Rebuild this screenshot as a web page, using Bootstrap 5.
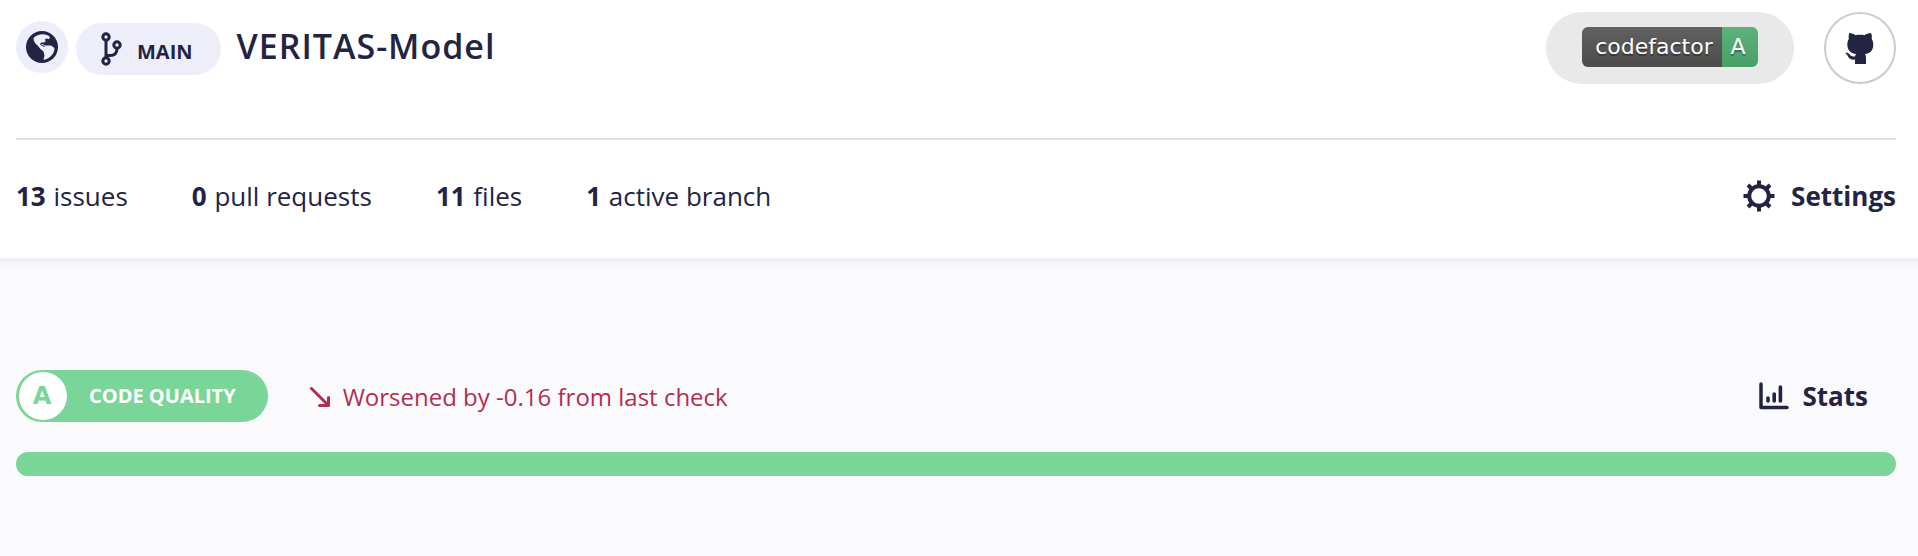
<!DOCTYPE html>
<html lang="en">
<head>
<meta charset="utf-8">
<meta name="viewport" content="width=device-width, initial-scale=1">
<title>VERITAS-Model</title>
<link href="https://cdn.jsdelivr.net/npm/bootstrap@5.3.0/dist/css/bootstrap.min.css" rel="stylesheet">
<style>
  :root { --ink: #232443; --lilac: #eeeefa; --good: #7ad598; --bad: #b02f50; }
  body { font-family: "Open Sans", "Noto Sans", sans-serif; color: var(--ink); background: #fafafd; font-size: 26px; line-height: 36px; }
  svg { display: block; flex: none; }
  a { color: inherit; text-decoration: none; }
  .gutter { padding-left: 16px; padding-right: 22px; }
  .repo-head { background: #fff; box-shadow: 0 0 6px 4px rgba(35, 36, 67, .07); }
  .title-row { padding-top: 12px; padding-bottom: 54px; }
  .visibility { width: 52px; height: 52px; background: var(--lilac); }
  .branch-btn { height: 52px; background: var(--lilac); color: var(--ink); font-size: 20px; font-weight: 700; line-height: 28px; padding: 0 28px 0 24px; border: 0; margin-top: 2px; gap: 13px; }
  .branch-btn span { padding-top: 5px; }
  .repo-name { font-size: 34px; line-height: 50px; font-weight: 600; letter-spacing: 1px; }
  .head-actions { gap: 30px; }
  .grade-link { height: 72px; background: #e9e9e9; padding: 0 36px 2px; }
  .grade-tag { height: 40px; border-radius: 6px; font: 22px/40px "DejaVu Sans", sans-serif; color: #fff; text-shadow: 0 2px 1px rgba(0, 0, 0, .35); }
  .tag-name { width: 140px; padding-left: 4px; background: linear-gradient(#616161, #4c4c4c); }
  .tag-grade { width: 36px; padding-right: 4px; background: linear-gradient(#5bb27b, #48a068); }
  .github-link { width: 72px; height: 72px; border: 2px solid #cbcbd6; }
  .stats-row { border-top: 2px solid #e1e1e3; padding-top: 38px; padding-bottom: 44px; }
  .counts { gap: 64px; }
  .counts b { margin-right: 1px; }
  .quality { padding-top: 112px; }
  .quality-pill { height: 52px; background: var(--good); color: #fff; font-size: 20px; font-weight: 700; padding: 0 32px 0 3px; gap: 22px; }
  .quality-grade { width: 48px; height: 48px; background: #fff; color: var(--good); font: 700 24px/48px "DejaVu Sans", sans-serif; padding-right: 2px; }
  .trend { color: var(--bad); font-size: 24px; margin-left: 42px; padding-top: 2px; gap: 13px; }
  .stats-link { padding-right: 28px; gap: 13px; }
  .quality-bar { height: 24px; margin-top: 30px; border-radius: 12px; --bs-progress-bar-bg: #7ad598; }
</style>
</head>
<body>
<header class="repo-head gutter">
  <div class="title-row d-flex justify-content-between align-items-center">
    <div class="d-flex align-items-start">
      <span class="visibility rounded-circle d-flex align-items-center justify-content-center">
        <svg width="32" height="32" viewBox="0 0 32 32" role="img" aria-label="Public"><circle cx="16" cy="16" r="16" fill="#232443"/><path fill="#eeeefa" d="M7.500 7C10 4.500 13 3.300 16.500 3.300S22 4.200 24 6L23 8.200 20.500 7.600 18.500 9 20 10 18 11.500 15 11.500 14 13.500 16 15 19.500 16 18.500 14.500 15 14 16 13 20 14.500 25 14.500 28.500 17C28.500 20 27 23.500 24.500 25.500 22.500 27.500 20 28.500 17.500 28.700L18.500 24.500 17.500 20.500 14.500 18 12 15 9 12 7.800 9.500Z"/></svg>
      </span>
      <button type="button" class="branch-btn rounded-pill d-flex align-items-center ms-2">
        <svg width="24" height="36" viewBox="0 0 24 36" fill="none" stroke="#232443" stroke-width="3"><circle cx="6" cy="6" r="3.200"/><circle cx="6" cy="30" r="3.200"/><circle cx="17" cy="14" r="3.200"/><path d="M6 9v18M6 24.500h4c5 0 7-2.500 7-7"/></svg>
        <span>MAIN</span>
      </button>
      <h1 class="repo-name mb-0 ms-3">VERITAS-Model</h1>
    </div>
    <div class="head-actions d-flex align-items-center">
      <a href="#" class="grade-link rounded-pill d-flex align-items-center">
        <span class="grade-tag d-flex overflow-hidden text-center"><span class="tag-name">codefactor</span><span class="tag-grade">A</span></span>
      </a>
      <a href="#" class="github-link rounded-circle d-flex align-items-center justify-content-center" aria-label="GitHub">
        <svg width="30" height="32" viewBox="0 0 30 32" fill="#232443"><path d="M4.500 1C6.500 1 9 2 10.500 3.200c3-.5 6-.5 9 0C21 2 24 1 26 1c1 2 1 4 .7 6 1.300 2 1.800 4 1.500 7-.5 5-3.500 7.500-8.200 8.200.7 1 1 2 1 3.300V32H10v-4.500c-5 .8-6.500-2-7.500-4C2 22.500.800 22 .5 21c1-.8 2.800-.2 4 1.300 1.500 2 3 2.600 5.600 2 .1-.8.400-1.500 1-2.200C6.500 21.500 3 19 2.400 14c-.3-3 .2-5 1.400-7C3.500 5 3.500 3 4.500 1Z"/></svg>
      </a>
    </div>
  </div>
  <div class="stats-row d-flex justify-content-between align-items-center">
    <div class="counts d-flex">
      <span><b>13</b> issues</span><span><b>0</b> pull requests</span><span><b>11</b> files</span><span><b>1</b> active branch</span>
    </div>
    <a href="#" class="d-flex align-items-center fw-bold">
      <svg class="me-3" width="32" height="32" viewBox="-16 -16 32 32" fill="none" stroke="#232443"><circle r="9.800" stroke-width="4"/><path stroke-width="4" d="M0-10.500V-15.500M0 10.500V15.500M-10.500 0H-15.500M10.500 0H15.500M7.500-7.500 11-11M-7.500-7.500-11-11M7.500 7.500 11 11M-7.500 7.500-11 11"/></svg>
      Settings
    </a>
  </div>
</header>
<main class="quality gutter">
  <div class="d-flex align-items-center">
    <div class="quality-pill rounded-pill d-flex align-items-center"><span class="quality-grade rounded-circle text-center">A</span>CODE QUALITY</div>
    <div class="trend d-flex align-items-center">
      <svg width="20" height="20" viewBox="0 0 20 20" fill="none" stroke="#b02f50" stroke-width="3" stroke-linecap="round" stroke-linejoin="round"><path d="M1.500 1.500 18 18M9.500 18.500h9v-8"/></svg>
      Worsened by -0.16 from last check
    </div>
    <a href="#" class="stats-link d-flex align-items-center fw-bold ms-auto">
      <svg width="30" height="28" viewBox="0 0 30 28" fill="none" stroke="#232443" stroke-linecap="round" stroke-linejoin="round"><path stroke-width="3.500" d="M2 2v23.500h26"/><path stroke-width="3.600" d="M9 16v3M15.200 12v7M21.400 5v14"/></svg>
      Stats
    </a>
  </div>
  <div class="progress quality-bar" role="progressbar" aria-label="Code quality" aria-valuenow="100" aria-valuemin="0" aria-valuemax="100"><div class="progress-bar" style="width:100%"></div></div>
</main>
<script src="https://cdn.jsdelivr.net/npm/bootstrap@5.3.0/dist/js/bootstrap.bundle.min.js"></script>
</body>
</html>
